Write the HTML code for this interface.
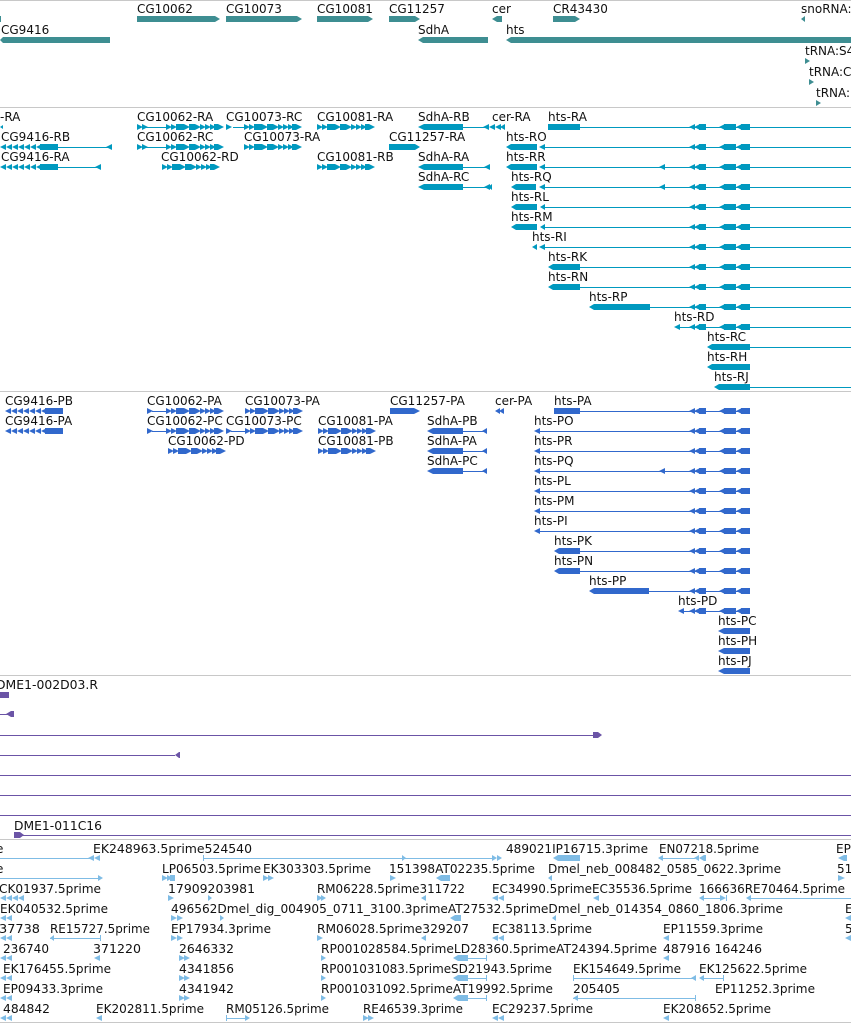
<!DOCTYPE html>
<html><head><meta charset="utf-8"><style>
html,body{margin:0;padding:0;background:#fff;width:851px;height:1024px;overflow:hidden}
svg{display:block}
text{font-family:"DejaVu Sans","Liberation Sans",sans-serif;font-size:12px;fill:#111}
</style></head><body>
<svg width="851" height="1024" viewBox="0 0 851 1024" xmlns="http://www.w3.org/2000/svg">
<defs>
<g id="hc">
<polygon points="689,0 695,-3 695,3"/><polygon points="694,0 700,-3 700,3"/><rect x="699" y="-3" width="7" height="6"/>
<polygon points="719,0 725,-3 725,3"/><rect x="724" y="-3" width="12" height="6"/><polygon points="736,0 742,-3 742,3"/><rect x="741" y="-3" width="9" height="6"/>
</g>
<g id="cgR">
<polygon points="0,-3 6,0 0,3"/><polygon points="5,-3 11,0 5,3"/><rect x="10" y="-3" width="8" height="6"/><polygon points="18,-3 24,0 18,3"/><rect x="23" y="-3" width="6" height="6"/><polygon points="29,-3 35,0 29,3"/><polygon points="34,-3 40,0 34,3"/><polygon points="39,-3 45,0 39,3"/><polygon points="44,-3 50,0 44,3"/><rect x="48" y="-3" width="4" height="6"/><polygon points="52,-3 58,0 52,3"/>
</g>
<g id="cgL">
<polygon points="0,0 6,-3 6,3"/><polygon points="6,0 12,-3 12,3"/><polygon points="12,0 18,-3 18,3"/><polygon points="18,0 24,-3 24,3"/><polygon points="24,0 30,-3 30,3"/><polygon points="30,0 36,-3 36,3"/><polygon points="36,0 42,-3 42,3"/><rect x="40" y="-3" width="18" height="6"/>
</g>
</defs>

<g fill="#c8c8c8">
<rect x="0" y="0" width="851" height="1"/>
<rect x="0" y="107" width="851" height="1"/>
<rect x="0" y="391" width="851" height="1"/>
<rect x="0" y="675" width="851" height="1"/>
<rect x="0" y="839" width="851" height="1"/>
<rect x="0" y="1022" width="851" height="1"/>
</g>

<g fill="#3e8e92">
<polygon points="137,16 215,16 220,19 215,22 137,22"/>
<polygon points="226,16 297,16 302,19 297,22 226,22"/>
<polygon points="317,16 368,16 373,19 368,22 317,22"/>
<polygon points="389,16 415,16 420,19 415,22 389,22"/>
<polygon points="492,19 497,16 502,16 502,22 497,22"/>
<polygon points="553,16 575,16 580,19 575,22 553,22"/>
<polygon points="801,19 805,16 805,22"/>
<polygon points="0,40 3,37 110,37 110,43 3,43"/>
<polygon points="418,40 423,37 488,37 488,43 423,43"/>
<polygon points="506,40 511,37 851,37 851,43 511,43"/>
<polygon points="805,58 810,61 805,64"/>
<polygon points="809,79 814,82 809,85"/>
<polygon points="816,100 821,103 816,106"/>
<rect x="0" y="16" width="1" height="6"/>
</g>
<text x="137" y="13">CG10062</text>
<text x="226" y="13">CG10073</text>
<text x="317" y="13">CG10081</text>
<text x="389" y="13">CG11257</text>
<text x="492" y="13">cer</text>
<text x="553" y="13">CR43430</text>
<text x="801" y="13">snoRNA:</text>
<text x="1" y="34">CG9416</text>
<text x="418" y="34">SdhA</text>
<text x="506" y="34">hts</text>
<text x="805" y="55">tRNA:S4</text>
<text x="809" y="76">tRNA:C</text>
<text x="816" y="97">tRNA:(</text>

<g fill="#0099bf" color="#0099bf">
<rect x="145" y="127" width="22" height="1"/>
<rect x="233" y="127" width="14" height="1"/>
<rect x="58" y="147" width="52" height="1"/><polygon points="106,147 112,144 112,150"/>
<rect x="145" y="147" width="22" height="1"/>
<rect x="58" y="167" width="42" height="1"/><polygon points="95,167 101,164 101,170"/>
<polygon points="0,127 3,125 3,129"/>
<use href="#cgL" x="0" y="147"/>
<use href="#cgL" x="0" y="167"/>
<polygon points="137,124 143,127 137,130"/><polygon points="142,124 148,127 142,130"/><use href="#cgR" x="166" y="127"/>
<polygon points="226,124 232,127 226,130"/><use href="#cgR" x="244" y="127"/>
<use href="#cgR" x="317" y="127"/>
<polygon points="137,144 143,147 137,150"/><polygon points="142,144 148,147 142,150"/><use href="#cgR" x="166" y="147"/>
<use href="#cgR" x="244" y="147"/>
<use href="#cgR" x="162" y="167"/>
<use href="#cgR" x="317" y="167"/>
<polygon points="389,144 415,144 420,147 415,150 389,150"/>
<polygon points="418,127 424,124 463,124 463,130 424,130"/><rect x="463" y="127" width="22" height="1"/>
<polygon points="483,127 489,124 489,130"/><polygon points="489,127 495,124 495,130"/><polygon points="495,127 501,124 501,130"/><polygon points="500,127 505,124 505,130"/>
<polygon points="418,167 424,164 463,164 463,170 424,170"/><rect x="463" y="167" width="24" height="1"/><polygon points="484,167 490,164 490,170"/>
<polygon points="418,187 424,184 463,184 463,190 424,190"/><rect x="463" y="187" width="24" height="1"/><polygon points="484,187 490,184 490,190"/><polygon points="488,187 492,184 492,190"/>
<rect x="548" y="124" width="32" height="6"/><rect x="580" y="127" width="271" height="1"/><use href="#hc" y="127"/>
<polygon points="506,147 511,144 537,144 537,150 511,150"/><polygon points="539,147 545,144 545,150"/><rect x="545" y="147" width="306" height="1"/><use href="#hc" y="147"/>
<polygon points="506,167 511,164 537,164 537,170 511,170"/><polygon points="539,167 545,164 545,170"/><rect x="545" y="167" width="306" height="1"/><polygon points="659,167 665,164 665,170"/><use href="#hc" y="167"/>
<polygon points="511,187 516,184 536,184 536,190 516,190"/><polygon points="539,187 545,184 545,190"/><rect x="545" y="187" width="306" height="1"/><polygon points="659,187 665,184 665,190"/><use href="#hc" y="187"/>
<polygon points="511,207 516,204 537,204 537,210 516,210"/><polygon points="540,207 545,204 545,210"/><rect x="545" y="207" width="306" height="1"/><use href="#hc" y="207"/>
<polygon points="511,227 516,224 537,224 537,230 516,230"/><polygon points="540,227 545,224 545,230"/><rect x="545" y="227" width="306" height="1"/><use href="#hc" y="227"/>
<polygon points="532,247 537,244 537,250"/><polygon points="539,247 545,244 545,250"/><rect x="545" y="247" width="306" height="1"/><use href="#hc" y="247"/>
<polygon points="548,267 553,264 580,264 580,270 553,270"/><rect x="580" y="267" width="271" height="1"/><use href="#hc" y="267"/>
<polygon points="548,287 553,284 580,284 580,290 553,290"/><rect x="580" y="287" width="271" height="1"/><use href="#hc" y="287"/>
<polygon points="589,307 594,304 650,304 650,310 594,310"/><rect x="650" y="307" width="201" height="1"/><use href="#hc" y="307"/>
<polygon points="674,327 680,324 680,330"/><rect x="680" y="327" width="171" height="1"/><use href="#hc" y="327"/>
<polygon points="707,347 712,344 750,344 750,350 712,350"/><rect x="750" y="347" width="101" height="1"/>
<polygon points="707,367 712,364 750,364 750,370 712,370"/>
<polygon points="714,387 719,384 750,384 750,390 719,390"/><rect x="750" y="387" width="101" height="1"/>
</g>
<text x="0" y="121">-RA</text>
<text x="137" y="121">CG10062-RA</text>
<text x="226" y="121">CG10073-RC</text>
<text x="317" y="121">CG10081-RA</text>
<text x="418" y="121">SdhA-RB</text>
<text x="492" y="121">cer-RA</text>
<text x="548" y="121">hts-RA</text>
<text x="1" y="141">CG9416-RB</text>
<text x="137" y="141">CG10062-RC</text>
<text x="244" y="141">CG10073-RA</text>
<text x="389" y="141">CG11257-RA</text>
<text x="506" y="141">hts-RO</text>
<text x="1" y="161">CG9416-RA</text>
<text x="161" y="161">CG10062-RD</text>
<text x="317" y="161">CG10081-RB</text>
<text x="418" y="161">SdhA-RA</text>
<text x="506" y="161">hts-RR</text>
<text x="418" y="181">SdhA-RC</text>
<text x="511" y="181">hts-RQ</text>
<text x="511" y="201">hts-RL</text>
<text x="511" y="221">hts-RM</text>
<text x="532" y="241">hts-RI</text>
<text x="548" y="261">hts-RK</text>
<text x="548" y="281">hts-RN</text>
<text x="589" y="301">hts-RP</text>
<text x="674" y="321">hts-RD</text>
<text x="707" y="341">hts-RC</text>
<text x="707" y="361">hts-RH</text>
<text x="714" y="381">hts-RJ</text>

<g fill="#3168cc" color="#3168cc">
<use href="#cgL" x="5" y="411"/>
<use href="#cgL" x="5" y="431"/>
<polygon points="147,408 153,411 147,414"/><rect x="152" y="411" width="15" height="1"/><use href="#cgR" x="166" y="411"/>
<use href="#cgR" x="245" y="411"/>
<polygon points="147,428 153,431 147,434"/><rect x="152" y="431" width="15" height="1"/><use href="#cgR" x="166" y="431"/>
<polygon points="226,428 232,431 226,434"/><rect x="231" y="431" width="15" height="1"/><use href="#cgR" x="245" y="431"/>
<use href="#cgR" x="318" y="431"/>
<use href="#cgR" x="168" y="451"/>
<use href="#cgR" x="318" y="451"/>
<polygon points="390,408 414,408 420,411 414,414 390,414"/>
<polygon points="495,411 500,408 500,414"/><polygon points="499,411 504,408 504,414"/>
<polygon points="427,431 433,428 463,428 463,434 433,434"/><rect x="463" y="431" width="24" height="1"/><polygon points="482,431 487,428 487,434"/>
<polygon points="427,451 433,448 463,448 463,454 433,454"/><rect x="463" y="451" width="24" height="1"/><polygon points="482,451 487,448 487,454"/>
<polygon points="427,471 433,468 463,468 463,474 433,474"/><rect x="463" y="471" width="24" height="1"/><polygon points="482,471 487,468 487,474"/>
<rect x="554" y="408" width="26" height="6"/><rect x="580" y="411" width="170" height="1"/><use href="#hc" y="411"/>
<polygon points="534,431 540,428 540,434"/><rect x="540" y="431" width="210" height="1"/><use href="#hc" y="431"/>
<polygon points="534,451 540,448 540,454"/><rect x="540" y="451" width="210" height="1"/><use href="#hc" y="451"/>
<polygon points="534,471 540,468 540,474"/><rect x="540" y="471" width="210" height="1"/><polygon points="659,471 665,468 665,474"/><use href="#hc" y="471"/>
<polygon points="534,491 540,488 540,494"/><rect x="540" y="491" width="210" height="1"/><use href="#hc" y="491"/>
<polygon points="534,511 540,508 540,514"/><rect x="540" y="511" width="210" height="1"/><use href="#hc" y="511"/>
<polygon points="534,531 540,528 540,534"/><rect x="540" y="531" width="210" height="1"/><use href="#hc" y="531"/>
<polygon points="554,551 559,548 580,548 580,554 559,554"/><rect x="580" y="551" width="170" height="1"/><use href="#hc" y="551"/>
<polygon points="554,571 559,568 580,568 580,574 559,574"/><rect x="580" y="571" width="170" height="1"/><use href="#hc" y="571"/>
<polygon points="589,591 594,588 649,588 649,594 594,594"/><rect x="649" y="591" width="101" height="1"/><use href="#hc" y="591"/>
<polygon points="678,611 684,608 684,614"/><rect x="684" y="611" width="66" height="1"/><use href="#hc" y="611"/>
<polygon points="718,631 724,628 750,628 750,634 724,634"/>
<polygon points="718,651 724,648 750,648 750,654 724,654"/>
<polygon points="718,671 724,668 750,668 750,674 724,674"/>
</g>
<text x="5" y="405">CG9416-PB</text>
<text x="147" y="405">CG10062-PA</text>
<text x="245" y="405">CG10073-PA</text>
<text x="390" y="405">CG11257-PA</text>
<text x="495" y="405">cer-PA</text>
<text x="554" y="405">hts-PA</text>
<text x="5" y="425">CG9416-PA</text>
<text x="147" y="425">CG10062-PC</text>
<text x="226" y="425">CG10073-PC</text>
<text x="318" y="425">CG10081-PA</text>
<text x="427" y="425">SdhA-PB</text>
<text x="534" y="425">hts-PO</text>
<text x="168" y="445">CG10062-PD</text>
<text x="318" y="445">CG10081-PB</text>
<text x="427" y="445">SdhA-PA</text>
<text x="534" y="445">hts-PR</text>
<text x="427" y="465">SdhA-PC</text>
<text x="534" y="465">hts-PQ</text>
<text x="534" y="485">hts-PL</text>
<text x="534" y="505">hts-PM</text>
<text x="534" y="525">hts-PI</text>
<text x="554" y="545">hts-PK</text>
<text x="554" y="565">hts-PN</text>
<text x="589" y="585">hts-PP</text>
<text x="678" y="605">hts-PD</text>
<text x="718" y="625">hts-PC</text>
<text x="718" y="645">hts-PH</text>
<text x="718" y="665">hts-PJ</text>

<g fill="#6b54a6">
<rect x="0" y="692" width="9" height="6"/>
<rect x="0" y="714" width="8" height="1"/><polygon points="6,714 11,711 14,711 14,717 11,717"/>
<rect x="0" y="735" width="595" height="1"/><polygon points="593,732 598,732 602,735 598,738 593,738"/>
<rect x="0" y="755" width="175" height="1"/><polygon points="175,755 179,752 180,752 180,758 179,758"/>
<rect x="0" y="775" width="851" height="1"/>
<rect x="0" y="795" width="851" height="1"/>
<rect x="0" y="815" width="851" height="1"/>
<rect x="14" y="835" width="837" height="1"/><polygon points="14,832 20,832 24,835 20,838 14,838"/>
</g>
<text x="-4" y="689" textLength="102" lengthAdjust="spacingAndGlyphs">DME1-002D03.R</text>
<text x="14" y="830" textLength="88" lengthAdjust="spacingAndGlyphs">DME1-011C16</text>

<g fill="#7fbce5">
<rect x="0" y="858" width="92" height="1"/><polygon points="88,858 94,855 94,861"/><polygon points="94,858 100,855 100,861"/>
<rect x="203" y="855" width="1" height="6"/><rect x="203" y="858" width="290" height="1"/><polygon points="402,855 406,858 402,861"/><polygon points="492,855 497,858 492,861"/><polygon points="497,855 502,858 497,861"/>
<polygon points="553,858 558,855 580,855 580,861 558,861"/>
<polygon points="658,858 663,855 663,861"/><rect x="663" y="858" width="32" height="1"/><polygon points="694,858 699,855 699,861"/><polygon points="699,858 704,855 704,861"/><rect x="704" y="855" width="2" height="6"/>
<polygon points="838,858 844,855 844,861"/><rect x="844" y="855" width="3" height="6"/>
<rect x="0" y="878" width="100" height="1"/><polygon points="98,875 103,878 98,881"/>
<polygon points="162,875 168,878 162,881"/><polygon points="167,875 173,878 167,881"/><rect x="170" y="875" width="5" height="6"/>
<polygon points="263,875 269,878 263,881"/><polygon points="268,875 274,878 268,881"/>
<polygon points="390,875 396,878 390,881"/>
<polygon points="436,878 441,875 450,875 450,881 441,881"/>
<polygon points="548,878 552,875 552,881"/>
<polygon points="838,875 845,878 838,881"/>
<polygon points="0,898 6,895 6,901"/><polygon points="6,898 12,895 12,901"/><polygon points="12,898 18,895 18,901"/><polygon points="18,898 24,895 24,901"/>
<polygon points="168,895 174,898 168,901"/>
<polygon points="208,895 212,898 208,901"/>
<polygon points="317,895 323,898 317,901"/><polygon points="321,895 326,898 321,901"/>
<polygon points="421,898 426,895 426,901"/>
<polygon points="492,898 498,895 498,901"/><polygon points="498,898 504,895 504,901"/>
<polygon points="593,898 599,895 599,901"/>
<polygon points="699,898 704,895 704,901"/><rect x="704" y="898" width="20" height="1"/><polygon points="720,895 726,898 720,901"/><rect x="726" y="895" width="1" height="6"/>
<polygon points="746,898 751,895 751,901"/><rect x="751" y="898" width="100" height="1"/>
<polygon points="0,918 6,915 6,921"/><polygon points="6,918 12,915 12,921"/>
<polygon points="171,915 177,918 171,921"/><polygon points="177,915 183,918 177,921"/>
<polygon points="220,915 224,918 220,921"/>
<polygon points="450,918 455,915 461,915 461,921 455,921"/>
<polygon points="552,918 556,915 556,921"/>
<polygon points="845,918 851,915 851,921"/>
<polygon points="0,938 6,935 6,941"/><polygon points="6,938 12,935 12,941"/>
<polygon points="50,938 54,935 54,941"/><rect x="50" y="938" width="50" height="1"/><rect x="100" y="935" width="1" height="6"/>
<polygon points="171,935 177,938 171,941"/><polygon points="177,935 183,938 177,941"/>
<polygon points="317,935 323,938 317,941"/><polygon points="421,938 426,935 426,941"/>
<polygon points="492,938 498,935 498,941"/><polygon points="498,938 504,935 504,941"/>
<polygon points="663,938 669,935 669,941"/>
<polygon points="845,938 851,935 851,941"/>
<polygon points="0,958 6,955 6,961"/><polygon points="6,958 12,955 12,961"/>
<polygon points="94,958 100,955 100,961"/>
<polygon points="179,955 185,958 179,961"/><polygon points="184,955 190,958 184,961"/>
<polygon points="321,955 326,958 321,961"/>
<polygon points="453,958 458,955 468,955 468,961 458,961"/><rect x="468" y="958" width="18" height="1"/><rect x="486" y="955" width="1" height="6"/>
<polygon points="663,958 669,955 669,961"/>
<polygon points="0,978 6,975 6,981"/><polygon points="6,978 12,975 12,981"/>
<polygon points="179,975 185,978 179,981"/><polygon points="184,975 190,978 184,981"/>
<polygon points="321,975 326,978 321,981"/>
<polygon points="453,978 458,975 468,975 468,981 458,981"/><rect x="468" y="978" width="18" height="1"/><rect x="486" y="975" width="1" height="6"/>
<rect x="573" y="975" width="1" height="6"/><rect x="573" y="978" width="120" height="1"/><polygon points="691,978 696,975 696,981"/>
<polygon points="699,978 704,975 704,981"/><rect x="704" y="978" width="20" height="1"/><rect x="723" y="975" width="1" height="6"/>
<polygon points="0,998 6,995 6,1001"/><polygon points="6,998 12,995 12,1001"/>
<polygon points="179,995 185,998 179,1001"/><polygon points="184,995 190,998 184,1001"/>
<polygon points="321,995 326,998 321,1001"/>
<polygon points="453,998 458,995 468,995 468,1001 458,1001"/><rect x="468" y="998" width="18" height="1"/><rect x="486" y="995" width="1" height="6"/>
<polygon points="573,998 578,995 578,1001"/><rect x="573" y="998" width="122" height="1"/><rect x="695" y="995" width="1" height="6"/>
<polygon points="0,1018 6,1015 6,1021"/><polygon points="6,1018 12,1015 12,1021"/>
<polygon points="96,1018 102,1015 102,1021"/>
<rect x="226" y="1015" width="1" height="6"/><rect x="226" y="1018" width="22" height="1"/><polygon points="245,1015 250,1018 245,1021"/>
<polygon points="363,1015 369,1018 363,1021"/><polygon points="368,1015 374,1018 368,1021"/>
<polygon points="492,1018 498,1015 498,1021"/><polygon points="498,1018 504,1015 504,1021"/>
<polygon points="663,1018 669,1015 669,1021"/>
</g>
<g style="font-size:12px">
<text x="-4" y="853">e</text>
<text x="93" y="853" textLength="159" lengthAdjust="spacingAndGlyphs">EK248963.5prime524540</text>
<text x="506" y="853" textLength="142" lengthAdjust="spacingAndGlyphs">489021IP16715.3prime</text>
<text x="659" y="853" textLength="100" lengthAdjust="spacingAndGlyphs">EN07218.5prime</text>
<text x="836" y="853">EP</text>

<text x="-4" y="873">e</text>
<text x="162" y="873" textLength="99" lengthAdjust="spacingAndGlyphs">LP06503.5prime</text>
<text x="263" y="873" textLength="108" lengthAdjust="spacingAndGlyphs">EK303303.5prime</text>
<text x="389" y="873" textLength="146" lengthAdjust="spacingAndGlyphs">151398AT02235.5prime</text>
<text x="548" y="873" textLength="233" lengthAdjust="spacingAndGlyphs">Dmel_neb_008482_0585_0622.3prime</text>
<text x="837" y="873">51</text>

<text x="-1" y="893" textLength="102" lengthAdjust="spacingAndGlyphs">CK01937.5prime</text>
<text x="168" y="893" textLength="87" lengthAdjust="spacingAndGlyphs">17909203981</text>
<text x="317" y="893" textLength="148" lengthAdjust="spacingAndGlyphs">RM06228.5prime311722</text>
<text x="492" y="893" textLength="200" lengthAdjust="spacingAndGlyphs">EC34990.5primeEC35536.5prime</text>
<text x="699" y="893" textLength="146" lengthAdjust="spacingAndGlyphs">166636RE70464.5prime</text>

<text x="0" y="913" textLength="108" lengthAdjust="spacingAndGlyphs">EK040532.5prime</text>
<text x="171" y="913" textLength="612" lengthAdjust="spacingAndGlyphs">496562Dmel_dig_004905_0711_3100.3primeAT27532.5primeDmel_neb_014354_0860_1806.3prime</text>
<text x="845" y="913">E</text>

<text x="-1" y="933" textLength="41" lengthAdjust="spacingAndGlyphs">37738</text>
<text x="50" y="933" textLength="100" lengthAdjust="spacingAndGlyphs">RE15727.5prime</text>
<text x="171" y="933" textLength="100" lengthAdjust="spacingAndGlyphs">EP17934.3prime</text>
<text x="317" y="933" textLength="152" lengthAdjust="spacingAndGlyphs">RM06028.5prime329207</text>
<text x="492" y="933" textLength="100" lengthAdjust="spacingAndGlyphs">EC38113.5prime</text>
<text x="663" y="933" textLength="100" lengthAdjust="spacingAndGlyphs">EP11559.3prime</text>
<text x="845" y="933">5</text>

<text x="3" y="953" textLength="46" lengthAdjust="spacingAndGlyphs">236740</text>
<text x="93" y="953" textLength="48" lengthAdjust="spacingAndGlyphs">371220</text>
<text x="179" y="953" textLength="55" lengthAdjust="spacingAndGlyphs">2646332</text>
<text x="321" y="953" textLength="336" lengthAdjust="spacingAndGlyphs">RP001028584.5primeLD28360.5primeAT24394.5prime</text>
<text x="663" y="953" textLength="99" lengthAdjust="spacingAndGlyphs">487916 164246</text>

<text x="3" y="973" textLength="108" lengthAdjust="spacingAndGlyphs">EK176455.5prime</text>
<text x="179" y="973" textLength="55" lengthAdjust="spacingAndGlyphs">4341856</text>
<text x="321" y="973" textLength="231" lengthAdjust="spacingAndGlyphs">RP001031083.5primeSD21943.5prime</text>
<text x="573" y="973" textLength="108" lengthAdjust="spacingAndGlyphs">EK154649.5prime</text>
<text x="699" y="973" textLength="108" lengthAdjust="spacingAndGlyphs">EK125622.5prime</text>

<text x="3" y="993" textLength="100" lengthAdjust="spacingAndGlyphs">EP09433.3prime</text>
<text x="179" y="993" textLength="55" lengthAdjust="spacingAndGlyphs">4341942</text>
<text x="321" y="993" textLength="232" lengthAdjust="spacingAndGlyphs">RP001031092.5primeAT19992.5prime</text>
<text x="573" y="993" textLength="47" lengthAdjust="spacingAndGlyphs">205405</text>
<text x="715" y="993" textLength="100" lengthAdjust="spacingAndGlyphs">EP11252.3prime</text>

<text x="3" y="1013" textLength="47" lengthAdjust="spacingAndGlyphs">484842</text>
<text x="96" y="1013" textLength="108" lengthAdjust="spacingAndGlyphs">EK202811.5prime</text>
<text x="226" y="1013" textLength="103" lengthAdjust="spacingAndGlyphs">RM05126.5prime</text>
<text x="363" y="1013" textLength="100" lengthAdjust="spacingAndGlyphs">RE46539.3prime</text>
<text x="492" y="1013" textLength="101" lengthAdjust="spacingAndGlyphs">EC29237.5prime</text>
<text x="663" y="1013" textLength="108" lengthAdjust="spacingAndGlyphs">EK208652.5prime</text>
</g>
</svg>
</body></html>
